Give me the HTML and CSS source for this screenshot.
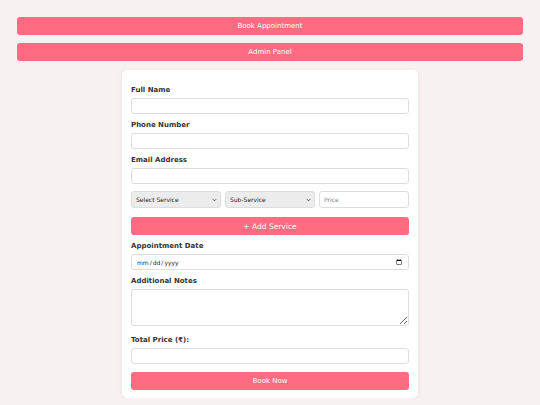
FILE: index.html
```html
<!DOCTYPE html>
<html>
<head>
<meta charset="utf-8">
<link rel="stylesheet" href="styles.css">
</head>
<body>
<div class="page">
  <button class="btn nav-btn">Book Appointment</button>
  <button class="btn nav-btn">Admin Panel</button>
  <form class="card">
    <div class="group">
      <label class="lbl">Full Name</label>
      <input class="field" type="text">
    </div>
    <div class="group">
      <label class="lbl">Phone Number</label>
      <input class="field" type="text">
    </div>
    <div class="group">
      <label class="lbl">Email Address</label>
      <input class="field" type="text">
    </div>
    <div class="service-row">
      <select class="sel"><option>Select Service</option></select>
      <select class="sel"><option>Sub-Service</option></select>
      <input class="field price" type="text" placeholder="Price">
    </div>
    <button type="button" class="btn add-btn">+ Add Service</button>
    <div class="group">
      <label class="lbl">Appointment Date</label>
      <input class="field date" type="date">
    </div>
    <div class="group group-notes">
      <label class="lbl">Additional Notes</label>
      <textarea class="field notes"></textarea>
    </div>
    <div class="group">
      <label class="lbl">Total Price (₹):</label>
      <input class="field" type="text">
    </div>
    <button type="button" class="btn submit-btn">Book Now</button>
  </form>
</div>
</body>
</html>
```
FILE: styles.css
```css
* { box-sizing: border-box; }
body {
  margin: 0;
  background: #f8f1f1;
  font-family: "DejaVu Sans", Verdana, sans-serif;
}
.page {
  padding: 17px 17px 0;
  display: flex;
  flex-direction: column;
}
.btn {
  display: block;
  width: 100%;
  border: none;
  border-radius: 3px;
  background: #ff6b81;
  color: #fff;
  font-family: "DejaVu Sans", Verdana, sans-serif;
  font-size: 7px;
  padding: 0;
  margin: 0;
}
.nav-btn {
  height: 18px;
  margin-bottom: 8px;
}
.card {
  width: 296px;
  margin: 1px auto 0;
  background: #fff;
  border-radius: 5px;
  box-shadow: 0 1px 4px rgba(0,0,0,0.08);
  padding: 15px 9px 8px;
  display: flex;
  flex-direction: column;
}
.group {
  display: flex;
  flex-direction: column;
  margin-bottom: 6px;
}
.lbl {
  font-size: 7px;
  font-weight: bold;
  color: #333;
  line-height: 10px;
  height: 10px;
  margin-bottom: 3px;
}
.field {
  height: 16px;
  width: 100%;
  border: 1px solid #ddd;
  border-radius: 3px;
  background: #fff;
  font-family: "DejaVu Sans", Verdana, sans-serif;
  font-size: 7px;
  padding: 0 4px;
  margin: 0;
}
.service-row {
  display: flex;
  gap: 4px;
  margin: 1px 0 9px;
}
.sel {
  -webkit-appearance: none;
  appearance: none;
  width: 90px;
  height: 17px;
  border: 1px solid #ddd;
  border-radius: 3px;
  background-color: #ececec;
  background-image: url("data:image/svg+xml,%3Csvg xmlns='http://www.w3.org/2000/svg' width='6' height='4' viewBox='0 0 6 4'%3E%3Cpath d='M1 1l2 2 2-2' fill='none' stroke='%23333' stroke-width='1'/%3E%3C/svg%3E");
  background-repeat: no-repeat;
  background-position: right 3px center;
  background-size: 5px 4px;
  font-family: "DejaVu Sans", Verdana, sans-serif;
  font-size: 6px;
  color: #222;
  padding: 0 4px;
  margin: 0;
}
.price {
  width: 90px;
  height: 17px;
  font-size: 6px;
}
.price::placeholder { color: #888; }
.add-btn {
  height: 18px;
  margin-bottom: 6px;
  font-size: 7.5px;
}
.date {
  color: #222;
  font-size: 6px;
}
.notes {
  height: 37px;
  resize: vertical;
  display: block;
}
.group-notes { margin-bottom: 9px; }
.submit-btn {
  height: 18px;
  margin-top: 2px;
}
```
